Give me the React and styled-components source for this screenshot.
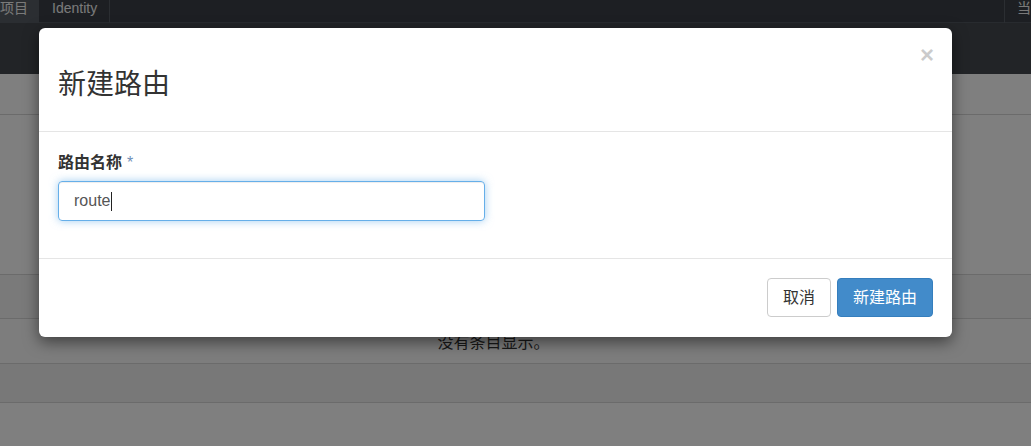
import React from 'react'
import styled, { createGlobalStyle } from 'styled-components'

const GlobalStyle = createGlobalStyle`
  html, body {
    margin: 0;
    padding: 0;
    overflow: hidden;
    background: #fff;
    font-family: "Liberation Sans", "Noto Sans CJK SC", sans-serif;
  }
  * { box-sizing: border-box; }
`

const Page = styled.div`
  position: relative;
  width: 1031px;
  height: 446px;
  overflow: hidden;
`

const TopNav = styled.div`
  display: flex;
  height: 23px;
  background: #3a3f46;
  border-bottom: 1px solid #50565e;
`

const NavItem = styled.div`
  width: ${p => p.$w}px;
  height: 23px;
  line-height: 17px;
  padding: ${p => (p.$active ? '0' : '0 13px')};
  font-size: 14px;
  color: #f4f4f4;
  white-space: nowrap;
  overflow: hidden;
  background: ${p => (p.$active ? '#565c64' : 'transparent')};
  border-right: 1px solid #575d65;
`

const NavSpacer = styled.div`
  flex: 1;
`

const NavRight = styled.div`
  width: 27px;
  height: 23px;
  line-height: 17px;
  padding-left: 12px;
  font-size: 14px;
  color: #f4f4f4;
  white-space: nowrap;
  overflow: hidden;
  border-left: 1px solid #575d65;
`

const SubBar = styled.div`
  height: 51px;
  background: #44484e;
`

const PageHeader = styled.div`
  height: 41px;
  border-bottom: 1px solid #d6d6d6;
`

const Gap = styled.div`
  height: ${p => p.$h}px;
`

const TableRow = styled.div`
  height: ${p => p.$h}px;
  background: ${p => p.$bg};
  border-top: 1px solid #d6d6d6;
  ${p => (p.$last ? 'border-bottom: 1px solid #d6d6d6;' : '')}
  display: flex;
  align-items: center;
  justify-content: center;
  padding-right: 44px;
  font-size: 16px;
  color: #333;
`

const Backdrop = styled.div`
  position: absolute;
  inset: 0;
  background: rgba(0, 0, 0, 0.5);
  padding: 28px 0 0 39px;
`

const Modal = styled.div`
  width: 913px;
  background: #fff;
  border-radius: 6px;
  box-shadow: 0 5px 15px rgba(0, 0, 0, 0.5);
  color: #333;
`

const Header = styled.div`
  display: flex;
  align-items: flex-start;
  padding: 19px;
  border-bottom: 1px solid #e5e5e5;
`

const Title = styled.h3`
  flex: 1;
  margin: 22px 0 12px;
  font-size: 28px;
  line-height: 31px;
  font-weight: normal;
  color: #333;
`

const Close = styled.button`
  border: 0;
  background: none;
  padding: 0;
  margin: -4px -1px 0 0;
  font-family: "Liberation Sans", sans-serif;
  font-size: 24px;
  font-weight: bold;
  line-height: 1;
  color: #000;
  opacity: 0.2;
  cursor: pointer;
`

const Body = styled.div`
  padding: 20px 19px;
  border-bottom: 1px solid #e5e5e5;
`

const FormGroup = styled.div`
  margin-bottom: 17px;
`

const Label = styled.label`
  display: block;
  margin-bottom: 7px;
  font-size: 16px;
  line-height: 22px;
  font-weight: bold;
  color: #333;
`

const Required = styled.span`
  margin-left: 5px;
  font-size: 16px;
  font-weight: normal;
  color: #6f8fb8;
`

const Field = styled.div`
  display: flex;
  align-items: center;
  width: 427px;
  height: 40px;
  padding: 0 15px;
  border: 1px solid #66afe9;
  border-radius: 4px;
  box-shadow: inset 0 1px 1px rgba(0, 0, 0, 0.075), 0 0 8px rgba(102, 175, 233, 0.6);
  font-size: 16px;
  color: #555;
`

const Caret = styled.span`
  display: inline-block;
  width: 1px;
  height: 19px;
  margin-left: 1px;
  background: #222;
`

const Footer = styled.div`
  display: flex;
  justify-content: flex-end;
  gap: 6px;
  padding: 19px 19px 20px;
`

const Button = styled.button`
  height: 39px;
  padding: 0 15px;
  border-radius: 4px;
  border: 1px solid ${p => (p.$primary ? '#357ebd' : '#ccc')};
  background: ${p => (p.$primary ? '#428bca' : '#fff')};
  color: ${p => (p.$primary ? '#fff' : '#333')};
  font-family: "Liberation Sans", "Noto Sans CJK SC", sans-serif;
  font-size: 16px;
  line-height: 23px;
  cursor: pointer;
`

export default function App() {
  return (
    <>
      <GlobalStyle />
      <Page>
        <TopNav>
          <NavItem $active $w={39}>项目</NavItem>
          <NavItem $w={71}>Identity</NavItem>
          <NavSpacer />
          <NavRight>当前项目</NavRight>
        </TopNav>
        <SubBar />
        <PageHeader />
        <Gap $h={159} />
        <TableRow $h={44} $bg="#f5f5f5" />
        <TableRow $h={45} $bg="#fafafa">没有条目显示。</TableRow>
        <TableRow $h={40} $bg="#f0f0f0" $last />

        <Backdrop>
          <Modal>
            <Header>
              <Title>新建路由</Title>
              <Close aria-label="Close">×</Close>
            </Header>
            <Body>
              <FormGroup>
                <Label>
                  路由名称<Required>*</Required>
                </Label>
                <Field>
                  route<Caret />
                </Field>
              </FormGroup>
            </Body>
            <Footer>
              <Button>取消</Button>
              <Button $primary>新建路由</Button>
            </Footer>
          </Modal>
        </Backdrop>
      </Page>
    </>
  )
}
